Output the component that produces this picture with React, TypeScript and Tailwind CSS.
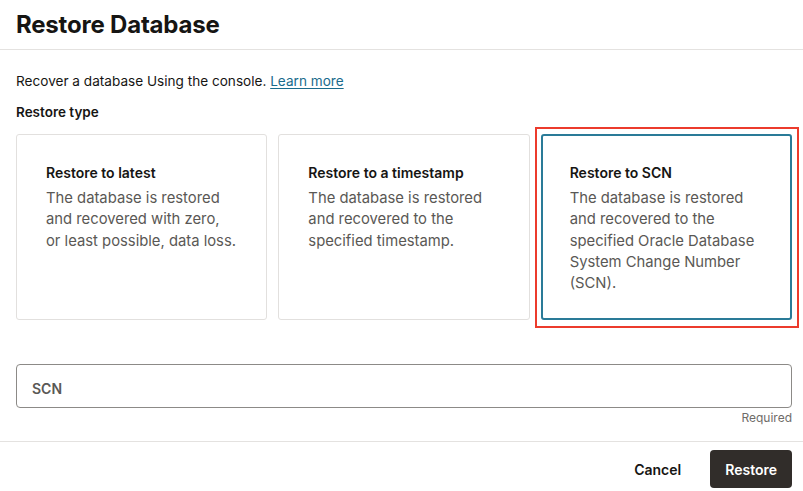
import React from 'react'

interface RestoreOption {
  title: string
  description: string[]
  selected?: boolean
}

const options: RestoreOption[] = [
  {
    title: 'Restore to latest',
    description: ['The database is restored', 'and recovered with zero,', 'or least possible, data loss.'],
  },
  {
    title: 'Restore to a timestamp',
    description: ['The database is restored', 'and recovered to the', 'specified timestamp.'],
  },
  {
    title: 'Restore to SCN',
    description: [
      'The database is restored',
      'and recovered to the',
      'specified Oracle Database',
      'System Change Number',
      '(SCN).',
    ],
    selected: true,
  },
]

const OptionCard: React.FC<{ option: RestoreOption }> = ({ option }) => {
  const card = (
    <div
      className={`h-[186px] rounded-[3px] ${
        option.selected
          ? 'border-2 border-[#2a7b98] px-[27px] pt-[28px]'
          : 'border border-[#e2e0de] px-[29px] pt-[29px]'
      }`}
    >
      <h3 className="text-[14px] font-semibold leading-[18px] text-[#161513]">{option.title}</h3>
      <p className="mt-[6px] text-[14.8px] leading-[21.25px] text-[#5a5855]">
        {option.description.map((line) => (
          <span key={line} className="block whitespace-nowrap">
            {line}
          </span>
        ))}
      </p>
    </div>
  )

  if (!option.selected) return <div className="min-w-0 flex-1">{card}</div>

  // highlighted card gets the red annotation box around it
  return (
    <div className="relative min-w-0 flex-1">
      <div className="pointer-events-none absolute -top-[7px] -left-[6px] -right-[7px] -bottom-[8px] border-2 border-[#ec3b2c]" />
      {card}
    </div>
  )
}

const App: React.FC = () => {
  return (
    <div className="h-[491px] w-[803px] bg-white font-['Inter',sans-serif] text-[#161513]">
      <div className="flex h-[50px] items-center border-b border-[#e4e2e0] px-4">
        <h1 className="text-[24px] font-bold tracking-[-0.2px]">Restore Database</h1>
      </div>

      <div className="pl-4 pr-[11px] pt-[22px]">
        <p className="text-[13.6px] leading-[18px]">
          Recover a database Using the console.{' '}
          <a href="#" className="text-[#1a6b8c] underline underline-offset-2">
            Learn more
          </a>
        </p>
        <p className="mt-[13px] text-[13.5px] font-semibold leading-[18px]">Restore type</p>

        <div className="mt-[13px] flex gap-[11px]">
          {options.map((o) => (
            <OptionCard key={o.title} option={o} />
          ))}
        </div>

        <div className="mt-[44px]">
          <div className="flex h-[44px] items-center rounded-[4px] border border-[#8c8a87] px-[15px] pt-[5px]">
            <span className="text-[14px] font-semibold text-[#5a5855]">SCN</span>
          </div>
          <p className="mt-[2px] text-right text-[12px] leading-[16px] text-[#6f6c69]">Required</p>
        </div>
      </div>

      <div className="mt-[15px] flex items-center justify-end gap-[29px] border-t border-[#e4e2e0] pr-[11px] pt-[8px]">
        <button className="text-[14px] font-semibold text-[#161513]">Cancel</button>
        <button className="h-[38px] rounded-[4px] bg-[#312d2a] px-[15px] text-[14px] font-semibold text-white">
          Restore
        </button>
      </div>
    </div>
  )
}

export default App
